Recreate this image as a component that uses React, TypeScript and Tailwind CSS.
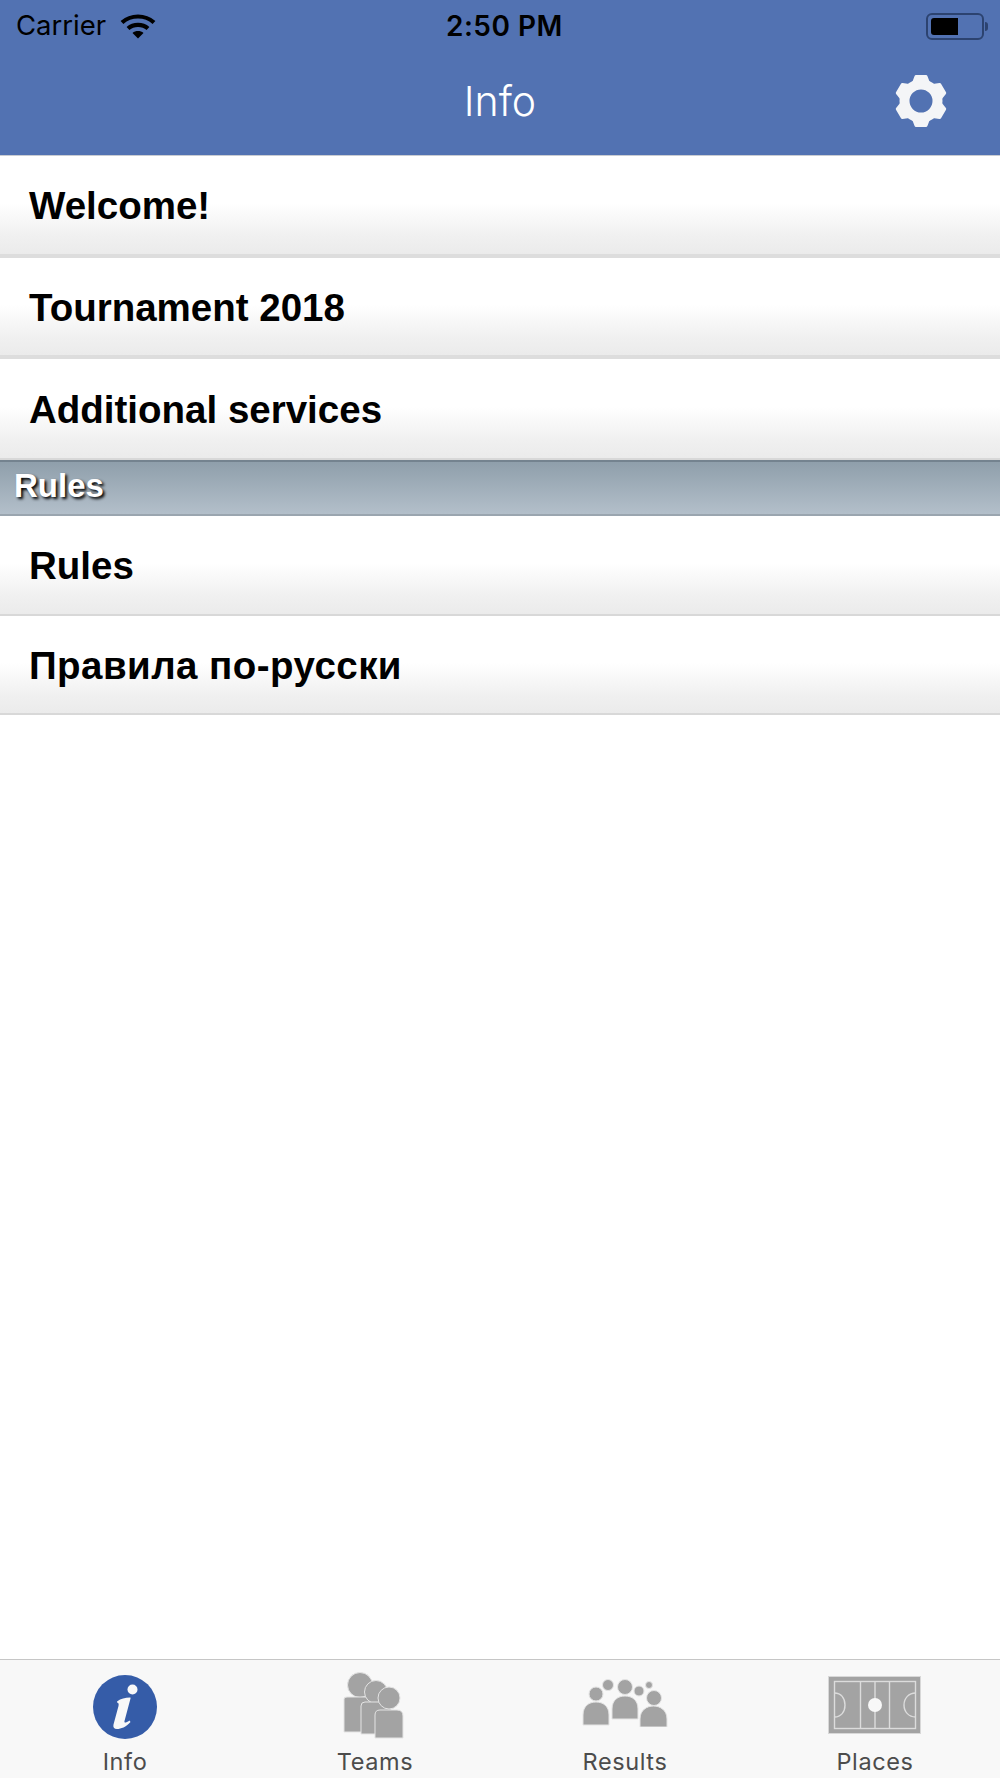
const ROW_BG = "bg-[linear-gradient(#ffffff_48%,#f0f0f0_82%,#ebebeb)]";

function Row({ label, heightClass, borderClass, textClass }: { label: string; heightClass: string; borderClass: string; textClass?: string }) {
  return (
    <div className={`flex items-center pl-[29px] pt-[3px] ${heightClass} ${borderClass} ${ROW_BG}`}>
      <span className={`text-[38.5px] font-bold text-black leading-none font-['Liberation_Sans',sans-serif] ${textClass ?? ""}`}>{label}</span>
    </div>
  );
}

function WifiIcon() {
  return (
    <svg width="36" height="26" viewBox="0 0 36 26" fill="none" stroke="#000">
      <path d="M2 9.5C11 1.5 25 1.5 34 9.5" strokeWidth="4.2" />
      <path d="M8 15.5C13.5 10.6 22.5 10.6 28 15.5" strokeWidth="4.2" />
      <path d="M12.5 20L18 25.5L23.5 20C20.5 17.4 15.5 17.4 12.5 20Z" fill="#000" stroke="none" />
    </svg>
  );
}

function BatteryIcon() {
  return (
    <div className="flex items-center gap-[1px]">
      <div className="w-[58px] h-[27px] rounded-[6px] border-2 border-[#2c4370] p-[3px]">
        <div className="h-full w-[27px] bg-black rounded-l-[3px]" />
      </div>
      <div className="w-[3px] h-[9px] bg-[#2c4370] rounded-r-full" />
    </div>
  );
}

function GearIcon() {
  return (
    <svg width="54" height="56" viewBox="-27 -28 54 56" fill="#f4f5f7">
      {[0, 60, 120, 180, 240, 300].map((a) => (
        <path
          key={a}
          d="M-7.5 -18L-5 -24.5H5L7.5 -18Z"
          transform={`rotate(${a})`}
          stroke="#f4f5f7"
          strokeWidth="3"
          strokeLinejoin="round"
        />
      ))}
      <circle r="16.5" fill="none" stroke="#f4f5f7" strokeWidth="10" />
    </svg>
  );
}

function InfoIcon() {
  return (
    <svg width="64" height="64" viewBox="0 0 64 64">
      <circle cx="32" cy="32" r="32" fill="#355ca8" />
      <circle cx="39.5" cy="14.5" r="5" fill="#f8f8f8" />
      <path
        d="M24 26.5C28 23.5 32 22.5 37 22.5C37.5 22.5 37.7 23 37.5 23.6L31.5 46C31 48 32.5 48.2 36.5 45.5L37.5 47C33 52 28 54 24 54C21 54 19.8 52 20.5 49.5L25.5 31C26 28.5 25.5 27.8 24.5 28Z"
        fill="#f8f8f8"
      />
    </svg>
  );
}

function TeamsIcon() {
  return (
    <svg width="64" height="70" viewBox="0 0 64 70" fill="#a3a3a3" stroke="#e4e4e4" strokeWidth="1">
      <circle cx="17" cy="15" r="12.5" />
      <path d="M1 29Q1 27 4 27H32V62H1Z" />
      <circle cx="33" cy="22" r="11.5" />
      <path d="M18 36Q18 32 22 32H48V64H18Z" />
      <circle cx="46" cy="28" r="11" />
      <path d="M32 45Q32 40 37 40H54Q60 40 60 46V68H32Z" />
    </svg>
  );
}

function ResultsIcon() {
  return (
    <svg width="86" height="50" viewBox="0 0 86 50" fill="#a3a3a3" stroke="#e4e4e4" strokeWidth="1">
      <circle cx="14" cy="17" r="7" />
      <circle cx="26" cy="8" r="5.5" />
      <circle cx="43" cy="10" r="7.5" />
      <circle cx="57" cy="14" r="5" />
      <circle cx="67" cy="8" r="3.5" />
      <circle cx="72" cy="21" r="7.5" />
      <path d="M1 48V38C1 29 7 25 14 25C21 25 27 29 27 38V48Z" />
      <path d="M30 42V32C30 23 36 19 43 19C50 19 56 23 56 32V42Z" />
      <path d="M58 50V42C58 33 65 29 71.5 29C78 29 85 33 85 42V50Z" />
    </svg>
  );
}

function PlacesIcon() {
  return (
    <svg width="93" height="58" viewBox="0 0 93 58">
      <rect x="0.5" y="0.5" width="92" height="57" fill="#a3a3a3" stroke="#d8d8d8" />
      <g fill="none" stroke="#dcdcdc" strokeWidth="1.4">
        <rect x="6.5" y="5.5" width="81" height="47" />
        <path d="M32.5 5.5V52.5M47 5.5V52.5M61.5 5.5V52.5" />
        <path d="M6.5 17C13 17 17 22 17 29C17 36 13 41 6.5 41" />
        <path d="M87.5 17C81 17 76 22 76 29C76 36 81 41 87.5 41" />
      </g>
      <circle cx="47" cy="29" r="7" fill="#f8f8f8" />
    </svg>
  );
}

function Tab({ label, icon, iconClass }: { label: string; icon: React.ReactNode; iconClass?: string }) {
  return (
    <div className="flex flex-col items-center">
      <div className={`h-[90px] flex items-center justify-center ${iconClass ?? ""}`}>{icon}</div>
      <span className="text-[23.5px] leading-none tracking-[0.6px] text-[#4c4c4c] font-['Inter',sans-serif]">
        {label}
      </span>
    </div>
  );
}

export default function App() {
  return (
    <div className="w-[1000px] h-[1778px] flex flex-col bg-white overflow-hidden">
      <div className="h-[156px] bg-[#5272b2] border-b border-[#c9ccd2] flex flex-col shrink-0">
        <div className="h-[52px] flex items-center justify-between pl-[16px] pr-[12px] font-['Inter',sans-serif] text-black relative">
          <div className="flex items-center gap-[14px]">
            <span className="text-[27.5px] leading-none">Carrier</span>
            <WifiIcon />
          </div>
          <span className="absolute left-[446px] text-[28px] leading-none font-semibold tracking-[0.5px]">2:50 PM</span>
          <BatteryIcon />
        </div>
        <div className="flex-1 flex items-center relative">
          <span className="w-full text-center text-white text-[41px] leading-none font-light font-['Inter',sans-serif] -mt-[5px]">Info</span>
          <div className="absolute right-[52px] top-[21px]">
            <GearIcon />
          </div>
        </div>
      </div>

      <Row label="Welcome!" heightClass="h-[102px]" borderClass="border-b-[4px] border-[#dddddd]" />
      <Row label="Tournament 2018" heightClass="h-[101px]" borderClass="border-b-[4px] border-[#dddddd]" />
      <Row label="Additional services" heightClass="h-[101px]" borderClass="border-b-[2px] border-[#d8d8d8]" />

      <div className="h-[56px] flex items-center pl-[14px] pb-[6px] bg-[linear-gradient(#8f9fab,#b3bfca)] border-t-[2px] border-b-[2px] border-t-[#74838f] border-b-[#9aa5af]">
        <span className="text-[33px] leading-none font-bold text-white font-['Liberation_Sans',sans-serif] [text-shadow:2px_2px_3px_#000000]">Rules</span>
      </div>

      <Row label="Rules" heightClass="h-[100px]" borderClass="border-b-[2px] border-[#d8d8d8]" />
      <Row label="Правила по-русски" heightClass="h-[99px]" borderClass="border-b-[2px] border-[#d8d8d8]" textClass="tracking-[0.45px]" />

      <div className="flex-1" />

      <div className="h-[119px] shrink-0 bg-[#f8f8f8] border-t border-[#c6c6c6] grid grid-cols-4">
        <Tab label="Info" iconClass="pt-[3px]" icon={<InfoIcon />} />
        <Tab label="Teams" icon={<TeamsIcon />} />
        <Tab label="Results" iconClass="pb-[6px]" icon={<ResultsIcon />} />
        <Tab label="Places" iconClass="pr-[2px]" icon={<PlacesIcon />} />
      </div>
    </div>
  );
}
